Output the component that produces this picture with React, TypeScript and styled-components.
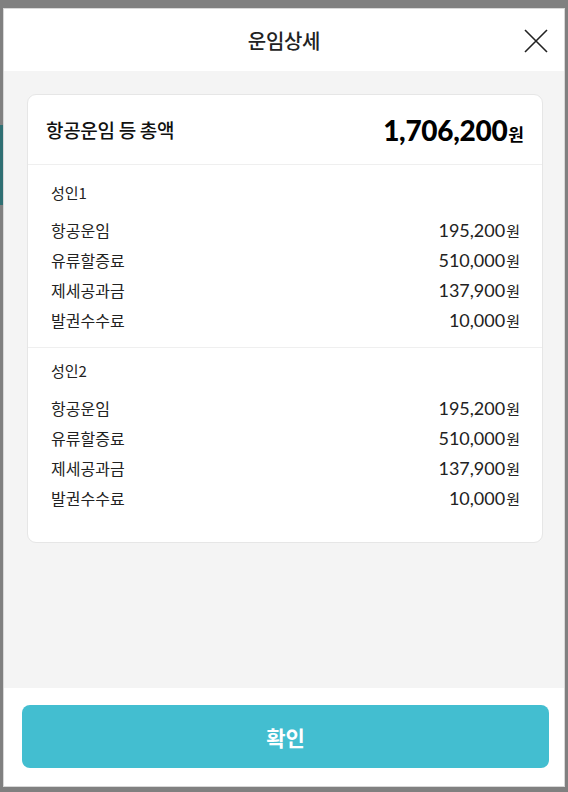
import React from "react";
import styled, { createGlobalStyle } from "styled-components";

const Global = createGlobalStyle`
  html, body { margin: 0; padding: 0; }
  body {
    background: #808080;
    font-family: "Noto Sans CJK KR", "Noto Sans", sans-serif;
    color: #111;
  }
  * { box-sizing: border-box; }
`;

const Backdrop = styled.div`
  position: relative;
  width: 568px;
  height: 792px;
  padding: 8px 3px 5px 3px;
  display: flex;
  overflow: hidden;
`;

const BgBand = styled.div<{ $top: number; $h: number; $c: string }>`
  position: absolute;
  left: 0;
  width: 8px;
  top: ${(p) => p.$top}px;
  height: ${(p) => p.$h}px;
  background: ${(p) => p.$c};
`;

const Modal = styled.div`
  position: relative;
  flex: 1;
  display: flex;
  flex-direction: column;
  background: #f4f4f4;
  border: 1px solid #d8d8d8;
`;

const Header = styled.header`
  height: 62px;
  flex: none;
  background: #fff;
  display: flex;
  align-items: center;
  justify-content: center;
  position: relative;
`;

const Title = styled.h1`
  margin: 0;
  font-size: 20px;
  font-weight: 500;
  color: #222;
  letter-spacing: -0.3px;
`;

const CloseBtn = styled.button`
  position: absolute;
  right: 16px;
  top: 20px;
  width: 24px;
  height: 24px;
  padding: 0;
  border: none;
  background: none;
  display: flex;
`;

const Body = styled.div`
  flex: 1;
  padding: 23px 21px 0 23px;
`;

const Card = styled.div`
  background: #fff;
  border: 1px solid #e6e6e6;
  border-radius: 9px;
  display: flex;
  flex-direction: column;
  padding-bottom: 17px;
`;

const TotalRow = styled.div`
  height: 70px;
  padding: 0 18px 0 18px;
  display: flex;
  align-items: center;
  justify-content: space-between;
  border-bottom: 1px solid #efefef;
`;

const TotalLabel = styled.span`
  font-size: 19px;
  font-weight: 500;
  color: #111;
  letter-spacing: -0.3px;
`;

const TotalAmount = styled.span`
  display: flex;
  align-items: baseline;
  color: #000;
`;

const BigNum = styled.span`
  font-family: Lato, "Noto Sans", sans-serif;
  font-weight: 900;
  font-size: 28px;
  letter-spacing: -0.3px;
`;

const Won = styled.span<{ $size: number; $weight: number }>`
  font-size: ${(p) => p.$size}px;
  font-weight: ${(p) => p.$weight};
  margin-left: 1px;
`;

const Section = styled.section<{ $first?: boolean; $last?: boolean }>`
  padding: ${(p) => (p.$first ? 17 : 12)}px 22px 12px 23px;
  border-bottom: ${(p) => (p.$last ? "none" : "1px solid #efefef")};
  display: flex;
  flex-direction: column;
`;

const SectionLabel = styled.div`
  font-size: 15px;
  line-height: 22px;
  color: #222;
  margin-bottom: 11px;
`;

const Row = styled.div`
  height: 30px;
  display: flex;
  align-items: center;
  justify-content: space-between;
  font-size: 16px;
  color: #222;
`;

const Amount = styled.span`
  display: flex;
  align-items: baseline;
`;

const Num = styled.span`
  font-family: Lato, "Noto Sans", sans-serif;
  font-size: 18px;
  font-weight: 400;
  color: #222;
`;

const Footer = styled.footer`
  height: 98px;
  flex: none;
  background: #fff;
  padding: 17px 15px 18px 18px;
  display: flex;
`;

const Confirm = styled.button`
  flex: 1;
  border: none;
  border-radius: 8px;
  background: #43bed0;
  color: #fff;
  font-family: "Noto Sans CJK KR", sans-serif;
  font-size: 21px;
  font-weight: 700;
`;

const groups = [
  {
    label: "성인1",
    items: [
      ["항공운임", "195,200"],
      ["유류할증료", "510,000"],
      ["제세공과금", "137,900"],
      ["발권수수료", "10,000"],
    ],
  },
  {
    label: "성인2",
    items: [
      ["항공운임", "195,200"],
      ["유류할증료", "510,000"],
      ["제세공과금", "137,900"],
      ["발권수수료", "10,000"],
    ],
  },
];

export default function App() {
  return (
    <>
      <Global />
      <Backdrop>
        <BgBand $top={125} $h={80} $c="#2f6f73" />
        <Modal>
          <Header>
            <Title>운임상세</Title>
            <CloseBtn aria-label="닫기">
              <svg width="24" height="24" viewBox="0 0 24 24">
                <path d="M1 1L23 23M23 1L1 23" stroke="#222" strokeWidth="1.6" fill="none" />
              </svg>
            </CloseBtn>
          </Header>
          <Body>
            <Card>
              <TotalRow>
                <TotalLabel>항공운임 등 총액</TotalLabel>
                <TotalAmount>
                  <BigNum>1,706,200</BigNum>
                  <Won $size={17} $weight={700}>원</Won>
                </TotalAmount>
              </TotalRow>
              {groups.map((g, gi) => (
                <Section key={g.label} $first={gi === 0} $last={gi === groups.length - 1}>
                  <SectionLabel>{g.label}</SectionLabel>
                  {g.items.map(([k, v]) => (
                    <Row key={k}>
                      <span>{k}</span>
                      <Amount>
                        <Num>{v}</Num>
                        <Won $size={15} $weight={400}>원</Won>
                      </Amount>
                    </Row>
                  ))}
                </Section>
              ))}
            </Card>
          </Body>
          <Footer>
            <Confirm>확인</Confirm>
          </Footer>
        </Modal>
      </Backdrop>
    </>
  );
}
